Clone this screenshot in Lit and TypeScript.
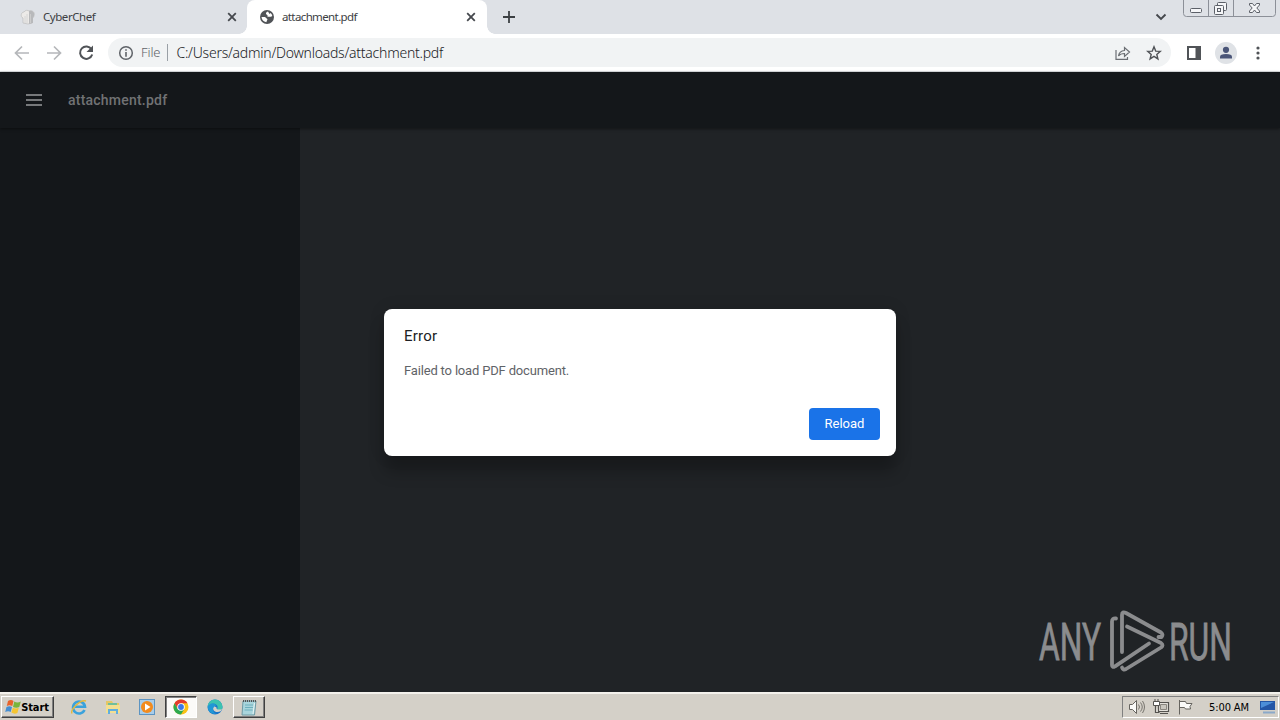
import { html, css, svg, LitElement } from 'lit';
import { customElement, property } from 'lit/decorators.js';

@customElement('browser-tab')
export class BrowserTab extends LitElement {
  static styles = css`
    :host {
      display: block;
      height: 34px;
    }
    .tab {
      position: relative;
      display: flex;
      align-items: center;
      box-sizing: border-box;
      height: 34px;
      padding: 0 10px 0 12px;
      color: #3c4043;
      font: 11.5px 'Noto Sans', sans-serif;
      letter-spacing: -0.45px;
    }
    .active {
      background: #fff;
      border-radius: 8px 8px 0 0;
      letter-spacing: -0.62px;
    }
    .active::before,
    .active::after {
      content: '';
      position: absolute;
      bottom: 0;
      width: 8px;
      height: 8px;
    }
    .active::before {
      left: -8px;
      background: radial-gradient(circle at 0 0, #dee1e6 7.5px, #fff 8px);
    }
    .active::after {
      right: -8px;
      background: radial-gradient(circle at 100% 0, #dee1e6 7.5px, #fff 8px);
    }
    .title {
      flex: 1;
      margin-left: 7px;
      padding-bottom: 2px;
      white-space: nowrap;
    }
    svg {
      display: block;
    }
  `;

  /**
   * The text shown in the tab.
   */
  @property({ type: String })
  label = '';

  @property({ type: Boolean })
  active = false;

  render() {
    return html`
      <div class="tab ${this.active ? 'active' : ''}">
        <slot></slot>
        <span class="title">${this.label}</span>
        <svg width="12" height="12" viewBox="0 0 12 12">
          <path
            d="M2.2 2.2l7.6 7.6M9.8 2.2L2.2 9.8"
            stroke="#45484d"
            stroke-width="1.8"
          />
        </svg>
      </div>
    `;
  }
}

@customElement('app-root')
export class AppRoot extends LitElement {
  static styles = css`
    :host {
      display: flex;
      flex-direction: column;
      width: 1280px;
      height: 720px;
      overflow: hidden;
      font-family: Roboto, sans-serif;
    }
    svg {
      display: block;
      flex: none;
    }
    .tabs {
      display: flex;
      align-items: center;
      height: 34px;
      background: #dee1e6;
    }
    .tab-first {
      width: 240px;
      margin: 0 -1px 0 8px;
    }
    .tab-second {
      width: 240px;
    }
    .new-tab {
      margin-left: 15px;
    }
    .chevron {
      margin-left: auto;
    }
    .window-buttons {
      display: flex;
      align-self: flex-start;
      margin: 0 4px 0 16px;
    }
    .toolbar {
      display: flex;
      align-items: center;
      height: 37px;
      padding: 0 12px 0 13px;
      background: #fff;
      border-bottom: 1px solid #dfe1e3;
    }
    .nav {
      display: flex;
      gap: 14px;
    }
    .omnibox {
      display: flex;
      flex: none;
      align-items: center;
      box-sizing: border-box;
      width: 1063px;
      height: 29px;
      margin-left: 13px;
      padding: 0 9px 0 10px;
      background: #f1f3f4;
      border-radius: 15px;
      font: 14px 'Noto Sans', sans-serif;
      color: #202124;
    }
    .scheme {
      margin-left: 7px;
      padding-right: 7px;
      color: #5f6368;
      font-size: 13px;
      font-weight: 300;
      letter-spacing: -0.1px;
      line-height: 17px;
      border-right: 1px solid #9aa0a6;
    }
    .url {
      flex: 1;
      margin-left: 8px;
      white-space: nowrap;
      letter-spacing: -0.24px;
      font-weight: 300;
    }
    .actions {
      display: flex;
      gap: 15px;
    }
    .profile {
      display: flex;
      align-items: center;
      gap: 13px;
      margin-left: 15px;
    }
    .menu {
      margin-left: -2px;
    }
    .viewer {
      position: relative;
      display: flex;
      flex-direction: column;
      height: 620px;
      background: #202326;
    }
    .viewer-header {
      display: flex;
      align-items: center;
      height: 56px;
      padding-left: 26px;
      background: #14171a;
      box-shadow: 0 1px 3px rgba(0, 0, 0, 0.45);
      z-index: 1;
    }
    .file-name {
      margin-left: 26px;
      color: #717274;
      font-size: 14px;
      font-weight: 500;
      letter-spacing: 0.22px;
    }
    .sidebar {
      width: 300px;
      flex: 1;
      background: #14171a;
    }
    .dialog {
      position: absolute;
      left: 384px;
      top: 237px;
      display: flex;
      flex-direction: column;
      box-sizing: border-box;
      width: 512px;
      height: 147px;
      padding: 18px 16px 16px 20px;
      background: #fff;
      border-radius: 8px;
      box-shadow: 0 0 16px rgba(0, 0, 0, 0.12), 0 16px 16px rgba(0, 0, 0, 0.24);
    }
    .dialog-title {
      color: #202124;
      font-size: 15px;
      line-height: 18px;
      letter-spacing: 0.2px;
    }
    .dialog-text {
      margin-top: 17px;
      color: #5f6368;
      font-size: 13px;
      line-height: 18px;
      letter-spacing: -0.17px;
    }
    .reload {
      align-self: flex-end;
      margin-top: auto;
      width: 71px;
      height: 32px;
      padding: 0 0 2px;
      border: 0;
      border-radius: 4px;
      background: #1a73e8;
      color: #fff;
      font: 13px Roboto, sans-serif;
    }
    .watermark {
      position: absolute;
      right: 5px;
      bottom: 16px;
      overflow: visible;
      font-family: Roboto, sans-serif;
    }
    .taskbar {
      display: flex;
      align-items: center;
      box-sizing: border-box;
      height: 28px;
      padding: 1px 1px 1px;
      background: #d4d0c8;
      border-top: 2px solid #f3f1ec;
      font: 11px 'DejaVu Sans Condensed', 'DejaVu Sans', sans-serif;
      color: #000;
    }
    .button {
      display: flex;
      flex: none;
      align-items: center;
      justify-content: center;
      box-sizing: border-box;
      width: 32px;
      height: 22px;
      border: 1px solid;
      border-color: #fff #404040 #404040 #fff;
      box-shadow: inset -1px -1px #808080;
    }
    .start {
      width: 53px;
      gap: 0;
      padding-right: 1px;
      font-weight: bold;
      letter-spacing: -0.1px;
    }
    .pressed {
      border-color: #404040 #fff #fff #404040;
      box-shadow: inset 1px 1px #808080;
      background: #fbfaf8;
    }
    .launchers {
      display: flex;
      align-items: center;
      gap: 18px;
      margin: 0 10px 0 17px;
    }
    .edge {
      margin: 0 10px;
    }
    .tray {
      display: flex;
      align-items: center;
      box-sizing: border-box;
      width: 157px;
      height: 22px;
      margin-left: auto;
      padding: 0 2px 0 5px;
      gap: 7px;
      border: 1px solid;
      border-color: #808080 #fff #fff #808080;
    }
    .clock {
      margin-left: 8px;
      width: 44px;
      white-space: nowrap;
      letter-spacing: -0.1px;
    }
  `;

  render() {
    return html`
      ${this._renderTabs()} ${this._renderToolbar()} ${this._renderViewer()}
      ${this._renderTaskbar()}
    `;
  }

  private _renderTabs() {
    return html`
      <div class="tabs">
        <browser-tab class="tab-first" label="CyberChef">
          <svg width="16" height="16" viewBox="0 0 16 16">
            <path
              d="M3 14V9C0 8 1 3 4 3c1-2 4-2 5-1 3-1 6 1 5 4 0 2-1 3-2 3v5l-4 1z"
              fill="#eceae8"
              stroke="#bbb"
              stroke-width=".7"
            />
            <path d="M9 2c4-1 6 2 5 5l-1 2v5l-4 1V5z" fill="#b8b9bb" />
            <path d="M5 7v7M7 5v9M10.5 5v9" stroke="#d0d0d0" stroke-width=".8" />
          </svg>
        </browser-tab>
        <browser-tab class="tab-second" label="attachment.pdf" active>
          <svg width="16" height="16" viewBox="0 0 16 16">
            <circle cx="8" cy="8" r="7" fill="#505357" />
            <path
              d="M2.500 8H6L8.500 10.300 7.300 13.200Q3 12.500 2.500 8zM9 2.600Q6.200 3.800 7.200 5.200L8.500 6.200V7.800H12L13.300 7Q13 5 11.500 3.900L10.500 5z"
              fill="#fff"
            />
          </svg>
        </browser-tab>
        <svg class="new-tab" width="14" height="14" viewBox="0 0 14 14">
          <path d="M7 1v12M1 7h12" stroke="#3c4043" stroke-width="1.8" />
        </svg>
        <svg class="chevron" width="12" height="12" viewBox="0 0 12 12">
          <path
            d="M1.500 3.500L6 8l4.500-4.500"
            fill="none"
            stroke="#45484d"
            stroke-width="1.900"
          />
        </svg>
        <div class="window-buttons">
          <svg width="93" height="17" viewBox="0 0 93 17">
            <path
              d="M.5 0v13.500q0 3 3 3h86q3 0 3-3V0M25.500 0v16M50.500 0v16"
              fill="none"
              stroke="#8c9098"
            />
            <g fill="#f5f6f8" stroke="#5c6068" stroke-width="1">
              <rect x="7.500" y="8.500" width="11" height="4" rx="1" />
              <rect x="34.500" y="2.500" width="9" height="8" rx="1" />
              <rect x="31.500" y="5.500" width="9" height="9" rx="1" />
              <rect x="34.500" y="8.500" width="3" height="3" />
              <path
                d="M66.500 3.500h3l2 2.500 2-2.500h3V5l-2.700 3 2.700 3v1.500h-3l-2-2.500-2 2.500h-3V11l2.700-3-2.700-3z"
              />
            </g>
          </svg>
        </div>
      </div>
    `;
  }

  private _renderToolbar() {
    return html`
      <div class="toolbar">
        <div class="nav">
          <svg width="18" height="18" viewBox="0 0 18 18">
            <path
              d="M16 9H3M9 2.500L2.500 9 9 15.500"
              fill="none"
              stroke="#b5b7ba"
              stroke-width="1.700"
            />
          </svg>
          <svg width="18" height="18" viewBox="0 0 18 18">
            <path
              d="M2 9h13M9 2.500L15.500 9 9 15.500"
              fill="none"
              stroke="#b5b7ba"
              stroke-width="1.700"
            />
          </svg>
          <svg width="18" height="18" viewBox="0 0 18 18">
            <path
              d="M14.500 5.300A6.200 6.200 0 1 0 15.200 10.500"
              fill="none"
              stroke="#505357"
              stroke-width="2"
            />
            <path d="M16 1.500V8H9.500z" fill="#505357" />
          </svg>
        </div>
        <div class="omnibox">
          <svg width="16" height="16" viewBox="0 0 16 16">
            <circle
              cx="8"
              cy="8"
              r="6.300"
              fill="none"
              stroke="#5f6368"
              stroke-width="1.500"
            />
            <path d="M8 4.200v1.600M8 7v4.800" stroke="#5f6368" stroke-width="1.600" />
          </svg>
          <span class="scheme">File</span>
          <span class="url">C:/Users/admin/Downloads/attachment.pdf</span>
          <div class="actions">
            <svg width="17" height="16" viewBox="0 0 17 16">
              <path
                d="M2 5v9.300h11.500V12M4.500 11C5 7.500 7 5.700 10.500 5.500V2.500L15.500 7l-5 4.500V8.500C8 8.500 6 9 4.500 11z"
                fill="none"
                stroke="#6b6e73"
                stroke-width="1.200"
              />
            </svg>
            <svg width="16" height="16" viewBox="0 0 16 16">
              <path
                d="M8 1.800l1.700 4.300 4.600.3-3.500 3 1.100 4.500L8 11.400l-3.900 2.500 1.100-4.500-3.500-3 4.600-.3z"
                fill="none"
                stroke="#505357"
                stroke-width="1.400"
              />
            </svg>
          </div>
        </div>
        <div class="profile">
          <svg width="16" height="16" viewBox="0 0 16 16">
            <path d="M1 1h14v14H1zM3 3v10h6.500V3z" fill="#505357" fill-rule="evenodd" />
          </svg>
          <svg width="22" height="22" viewBox="0 0 22 22">
            <circle cx="11" cy="11" r="11" fill="#dfe2e6" />
            <circle cx="11" cy="7.800" r="3.100" fill="#4a5578" />
            <path d="M5 16.500v-1.700q0-2.700 6-2.700t6 2.700v1.700z" fill="#4a5578" />
          </svg>
          <svg class="menu" width="20" height="16" viewBox="0 0 20 16">
            <g fill="#505357">
              <circle cx="10" cy="3" r="1.600" />
              <circle cx="10" cy="8" r="1.600" />
              <circle cx="10" cy="13" r="1.600" />
            </g>
          </svg>
        </div>
      </div>
    `;
  }

  private _renderViewer() {
    return html`
      <div class="viewer">
        <div class="viewer-header">
          <svg width="16" height="12" viewBox="0 0 16 12">
            <path d="M0 1h16M0 6h16M0 11h16" stroke="#77797b" stroke-width="2" />
          </svg>
          <span class="file-name">attachment.pdf</span>
        </div>
        <div class="sidebar"></div>
        ${this._renderWatermark()}
        <div class="dialog">
          <div class="dialog-title">Error</div>
          <div class="dialog-text">Failed to load PDF document.</div>
          <button class="reload">Reload</button>
        </div>
      </div>
    `;
  }

  private _renderWatermark() {
    const word = (text: string, x: number, width: number) => svg`
      <text
        x=${x}
        y="53.500"
        textLength=${width}
        lengthAdjust="spacingAndGlyphs"
      >${text}</text>
    `;
    return html`
      <svg class="watermark" width="240" height="70" viewBox="0 0 240 70">
        <g fill="#8b8c8e" stroke="#8b8c8e" stroke-width=".8" font-size="51">
          ${word('ANY', 4, 62)} ${word('RUN', 134, 63)}
        </g>
        <g
          fill="none"
          stroke="#8b8c8e"
          stroke-width="3.800"
          stroke-linecap="round"
          stroke-linejoin="round"
        >
          <path d="M81 12.500q-4-.5-4 3V59q0 3 3 1.300L114 37.500" />
          <path d="M87 46V9q0-4 4-2l35 19.500q2.500 2 .5 4.500h-3" />
          <path d="M92 20.500l34 16.500q3 2 0 4.500L91 63q-3 1.500-4-1.500" />
        </g>
      </svg>
    `;
  }

  private _renderTaskbar() {
    return html`
      <div class="taskbar">
        <div class="button start">
          <svg width="16" height="16" viewBox="0 0 16 16">
            <path d="M3 2q3-2 5.500 0L7.300 7q-3-1.500-5.500 0z" fill="#e8632b" />
            <path d="M9.300 2.500q3 2 6.500 0l-1.500 5.500q-3 1.500-6.300 0z" fill="#79b53c" />
            <path d="M1.500 8q3-1.500 5.500 0L5.700 13q-2.500-1.500-5.500 0z" fill="#458ed2" />
            <path d="M7.800 8.800q3 1.500 6 0L12.400 14q-3 1.500-6-.5z" fill="#f5c532" />
          </svg>
          <span>Start</span>
        </div>
        <div class="launchers">
          <svg width="16" height="18" viewBox="0 0 16 18">
            <path
              d="M13.500 12A6 6 0 1 1 14 8.800H4"
              fill="none"
              stroke="#3ba2dc"
              stroke-width="2.600"
            />
            <path
              d="M1 15.500C-1 12 9 1 15 3"
              fill="none"
              stroke="#e5b93b"
              stroke-width="1.400"
            />
          </svg>
          <svg width="16" height="16" viewBox="0 0 16 16">
            <path d="M1 2h6l1 2h6v10H1z" fill="#e5c765" />
            <path d="M3 4h9v3H3z" fill="#6fbf9b" />
            <path d="M1 6h14v8H1z" fill="#f3df91" />
            <path d="M3 15v-5h10v5h-2v-3H5v3z" fill="#61aede" />
          </svg>
          <svg width="16" height="16" viewBox="0 0 16 16">
            <rect x=".5" y=".5" width="15" height="15" fill="#a8cdea" stroke="#5c94c2" />
            <circle cx="8" cy="8" r="6" fill="#f28b1e" />
            <path d="M6 4.500L11.500 8 6 11.500z" fill="#fff" />
          </svg>
        </div>
        <div class="button pressed">
          <svg width="16" height="16" viewBox="0 0 16 16">
            <circle cx="8" cy="8" r="7.500" fill="#fbc116" />
            <path d="M1.500 4.250A7.500 7.500 0 0 1 14.500 4.250H8L4.750 9.900z" fill="#e33b2e" />
            <path d="M1.500 4.250A7.500 7.500 0 0 0 8 15.500L11.250 9.900H4.750z" fill="#2da94f" />
            <circle cx="8" cy="8" r="3.800" fill="#fff" />
            <circle cx="8" cy="8" r="2.900" fill="#3b78e7" />
          </svg>
        </div>
        <svg class="edge" width="16" height="16" viewBox="0 0 16 16">
          <circle cx="8" cy="8" r="7.500" fill="#1b75c8" />
          <path d="M.5 8A7.500 7.500 0 0 1 15.500 8c0 4-4 4-5.500 2.500C13 5 5 2 .5 8z" fill="#3cc2b0" />
          <path d="M7 7c-3 4 2 8 7 5l1-2c-2 1-6 1-5.500-1.500z" fill="#d4d0c8" />
          <path d="M1 7c4-5 8-2 8 0-4 0-4 6 0 8-5 0-9-3-8-8z" fill="#2197d5" />
        </svg>
        <div class="button">
          <svg width="16" height="17" viewBox="0 0 16 17">
            <path d="M2 2h13l-1.500 14H1z" fill="#a9d5dc" stroke="#6e9aa5" />
            <path d="M2 2h13" stroke="#555" stroke-width="2" stroke-dasharray="1 1" />
            <path d="M4 6h8M4 8.500h8M3.500 11h8" stroke="#6db0bd" />
            <path d="M13.500 4L12 15" stroke="#e7f5f4" />
          </svg>
        </div>
        ${this._renderTray()}
      </div>
    `;
  }

  private _renderTray() {
    return html`
      <div class="tray">
        <svg width="18" height="16" viewBox="0 0 18 16">
          <path
            d="M1.500 5.500h3l4-4v13l-4-4h-3z"
            fill="#fafaf8"
            stroke="#66645f"
          />
          <path
            d="M10.500 5.500q2 2.500 0 5M12.500 3.500q3.500 4.500 0 9M14.500 2q4 6 0 12"
            fill="none"
            stroke="#77746e"
          />
        </svg>
        <svg width="17" height="16" viewBox="0 0 17 16">
          <path
            d="M5.500 3.500h10v9h-10zM7 14.500h8M2.500 7v6.500h4"
            fill="#e5e2dc"
            stroke="#55534f"
            stroke-width="1.200"
          />
          <path d="M7.500 5.500h6v5h-6z" fill="#c9c6be" stroke="#8a8780" />
          <path
            d="M.5 2.500h6v4h-6zM2 0v2M5 0v2"
            fill="#fff"
            stroke="#55534f"
          />
        </svg>
        <svg width="17" height="16" viewBox="0 0 17 16">
          <path
            d="M2.500 1v14.500M2.500 2.500h6l1 2h5.500l-2 3 .5 2.500h-5l-1-1.500h-5"
            fill="#fafaf8"
            stroke="#66645f"
          />
        </svg>
        <span class="clock">5:00 AM</span>
        <svg width="16" height="16" viewBox="0 0 16 16">
          <path d="M0 2h15v9H0z" fill="#2456a6" />
          <path d="M1 3h13L1 9z" fill="#4c8ed8" />
          <path d="M3 13.500h12" stroke="#8ba9c9" stroke-width="2" />
        </svg>
      </div>
    `;
  }
}
